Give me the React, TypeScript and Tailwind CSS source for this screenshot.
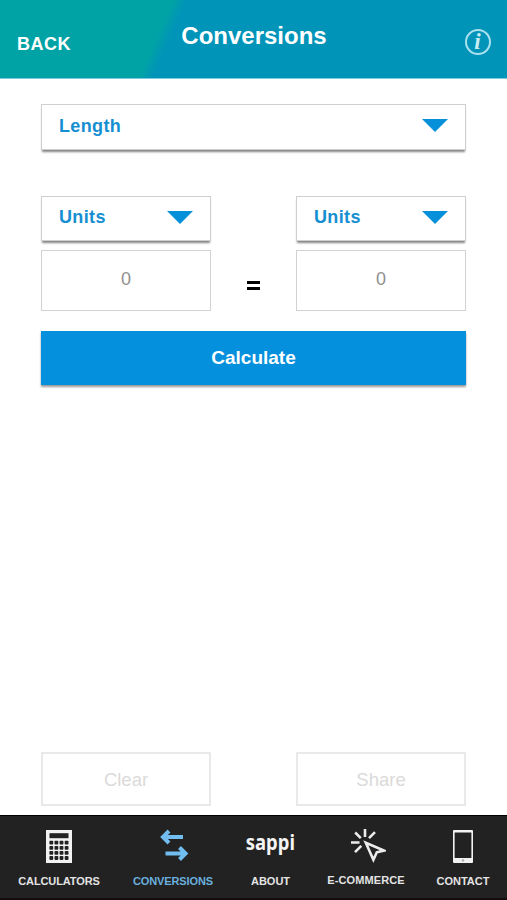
import { useState, type ReactNode } from "react";

function Caret() {
  return (
    <svg width="26" height="13" viewBox="0 0 26 13" className="shrink-0">
      <path d="M0 0h26L13 13z" fill="#0790da" />
    </svg>
  );
}

function Picker({ label, className }: { label: string; className: string }) {
  return (
    <button
      className={`flex items-center justify-between border border-[#cfcfcf] bg-white pr-[17px] pb-[3px] pl-[17px] text-lg font-bold text-[#168fd2] shadow-[0_3px_2px_-1px_#858585] ${className}`}
    >
      <span className="tracking-[0.35px]">{label}</span>
      <Caret />
    </button>
  );
}

function Unit() {
  const [value, setValue] = useState("");

  return (
    <div className="flex w-[170px] flex-col gap-[9px]">
      <Picker label="Units" className="h-[45px]" />
      <input
        value={value}
        onChange={(e) => setValue(e.target.value)}
        placeholder="0"
        className="h-[61px] w-full border border-[#d2d2d2] pb-[2px] text-center text-lg text-[#8f8f8f] outline-none placeholder:text-[#8f8f8f]"
      />
    </div>
  );
}

function Action({ label }: { label: string }) {
  return (
    <button className="h-[54px] w-[170px] border-2 border-[#e9e9e9] pt-0.5 text-[18.5px] text-[#dadada]">
      {label}
    </button>
  );
}

function Tab({
  label,
  className,
  children,
}: {
  label: string;
  className: string;
  children: ReactNode;
}) {
  return (
    <button className={`flex shrink-0 flex-col items-center ${className}`}>
      <span className="flex h-[59px] items-center justify-center pt-[2px]">
        {children}
      </span>
      <span className="text-[11px] leading-3 font-bold">{label}</span>
    </button>
  );
}

function CalculatorIcon() {
  const keys = [0, 1, 2, 3];
  return (
    <svg width="26" height="33" viewBox="0 0 26 33">
      <path d="M0 0h26v33H0z" fill="#f2f2f2" />
      <path d="M3.5 3.2h19v5h-19z" fill="#222" />
      {keys.map((row) =>
        keys.map((col) => (
          <rect
            key={`${row}-${col}`}
            x={3.4 + col * 5.1}
            y={10.8 + row * 5.1}
            width="3.8"
            height="3.8"
            rx="0.8"
            fill="#222"
          />
        ))
      )}
    </svg>
  );
}

function ArrowsIcon() {
  return (
    <svg
      width="28"
      height="32"
      viewBox="0 0 28 32"
      fill="none"
      stroke="#72bdf0"
      strokeWidth="4"
      className="overflow-visible"
    >
      <path d="M24 6H4M10 0 4 6l6 6M6.5 22.5h20M20.5 16.5l6 6-6 6" />
    </svg>
  );
}

function ClickIcon() {
  return (
    <svg
      width="36"
      height="35"
      viewBox="0 0 36 35"
      fill="none"
      stroke="#ececec"
      strokeWidth="2.6"
      className="ml-1"
    >
      <path d="M15 1v8M5.2 4.5l5.6 5.6M25 4.2l-6 6M1 14.5h8.5M5 24.2l6.3-6.3" />
      <path d="M15.8 14.8l7.6 17 3.4-7.5 7.1-1.7z" />
    </svg>
  );
}

function PhoneIcon() {
  return (
    <svg width="20" height="33" viewBox="0 0 20 33">
      <rect width="20" height="33" rx="1" fill="#f2f2f2" />
      <path d="M1.6 2.5h16.8V28H1.6z" fill="#222" />
      <circle cx="10" cy="30.4" r="1.2" fill="#aaa" />
    </svg>
  );
}

export default function App() {
  return (
    <div className="flex h-[900px] w-[507px] flex-col bg-white font-['Liberation_Sans',Arial,sans-serif]">
      <header className="flex h-[79px] items-start justify-between border-b border-[#7ccbdc] bg-[linear-gradient(114deg,#00a3a5_0%,#00a3a5_32%,#0094b8_34.5%,#0094b8_100%)] text-white">
        <button className="mt-[31px] ml-[17px] w-[60px] text-left text-lg leading-[27px] font-bold tracking-[0.5px]">
          BACK
        </button>
        <h1 className="mt-5 text-2xl leading-8 font-bold">Conversions</h1>
        <button className="mt-[29px] mr-4 flex h-[26px] w-[60px] justify-end">
          <span className="flex size-[26px] items-center justify-center rounded-full border-2 border-[#a9e1ee] pr-px pb-px font-['Liberation_Serif',serif] text-[23px] leading-none font-bold text-[#c9edf5] italic">
            i
          </span>
        </button>
      </header>

      <main className="flex flex-1 flex-col px-[41px] pt-[25px] pb-[9px]">
        <Picker label="Length" className="h-[46px]" />

        <div className="mt-[46px] flex justify-between">
          <Unit />
          <span className="flex flex-col gap-[3px] self-end pb-[21px]">
            <span className="h-[3px] w-[13px] bg-black" />
            <span className="h-[3px] w-[13px] bg-black" />
          </span>
          <Unit />
        </div>

        <button className="mt-5 h-[54px] bg-[#0490dc] text-[19px] font-bold text-white shadow-[0_2px_2px_0_#999]">
          Calculate
        </button>

        <div className="mt-auto flex justify-between">
          <Action label="Clear" />
          <Action label="Share" />
        </div>
      </main>

      <nav className="flex h-[85px] border-t border-b-2 border-t-black border-b-[#160c10] bg-[#222] text-[#e4e4e4]">
        <Tab label="CALCULATORS" className="w-[118px] tracking-[-0.1px]">
          <CalculatorIcon />
        </Tab>
        <Tab
          label="CONVERSIONS"
          className="w-[110px] tracking-[-0.1px] text-[#6ab0df]"
        >
          <ArrowsIcon />
        </Tab>
        <Tab label="ABOUT" className="w-[85px]">
          <span className="-mt-3 scale-x-[0.84] font-['Noto_Sans',sans-serif] text-[22px] leading-none font-bold text-[#f4f4f4]">
            sappi
          </span>
        </Tab>
        <Tab label="E-COMMERCE" className="-mt-px w-[106px] tracking-[0.1px]">
          <ClickIcon />
        </Tab>
        <Tab label="CONTACT" className="w-[88px]">
          <PhoneIcon />
        </Tab>
      </nav>
    </div>
  );
}
